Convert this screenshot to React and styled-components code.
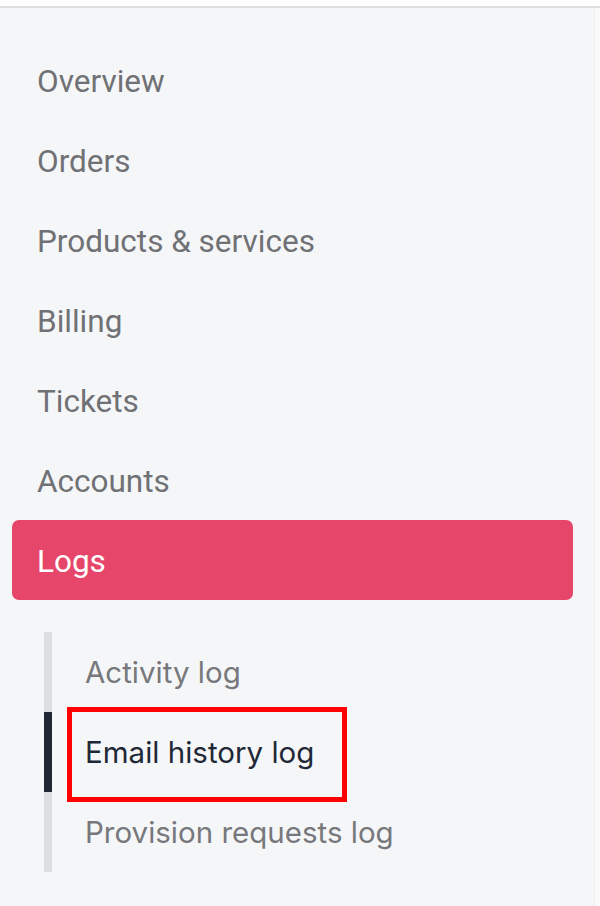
import React from "react";
import styled, { createGlobalStyle } from "styled-components";

const GlobalStyle = createGlobalStyle`
  html, body {
    margin: 0;
    padding: 0;
    background: #ffffff;
  }
`;

const Page = styled.div`
  width: 600px;
  height: 906px;
  display: flex;
  flex-direction: column;
  background: #fafafb;
  overflow: hidden;
`;

const TopStrip = styled.div`
  height: 6px;
  background: #ffffff;
  border-bottom: 2px solid #dedfe2;
  flex-shrink: 0;
`;

const Sidebar = styled.aside`
  flex: 1;
  width: 595px;
  background: #f5f6f8;
  border-right: 1px solid #eceef1;
  padding: 32px 21px 0 12px;
  box-sizing: border-box;
`;

const Nav = styled.nav`
  display: flex;
  flex-direction: column;
`;

const NavItem = styled.a`
  height: 80px;
  box-sizing: border-box;
  display: flex;
  align-items: center;
  padding: 2px 0 0 25px;
  border-radius: 7px;
  font-family: Roboto, "Liberation Sans", sans-serif;
  font-size: 31.5px;
  color: ${(p) => (p.$active ? "#ffffff" : "#707174")};
  background: ${(p) => (p.$active ? "#e6466a" : "transparent")};
  text-decoration: none;
`;

const SubNav = styled.div`
  margin: 32px 0 0 32px;
  display: flex;
  flex-direction: column;
`;

const SubItem = styled.a`
  position: relative;
  height: 80px;
  display: flex;
  align-items: center;
  padding-left: 33px;
  border-left: 8px solid ${(p) => (p.$current ? "#1f2836" : "#dcdde0")};
  font-family: Inter, "Liberation Sans", sans-serif;
  font-size: 29.5px;
  color: ${(p) => (p.$current ? "#1f2836" : "#77787c")};
  text-decoration: none;
`;

// red annotation frame around the current page link
const Highlight = styled.span`
  position: absolute;
  left: 15px;
  top: -5px;
  width: 280px;
  height: 95px;
  border: 5px solid #ff0000;
  box-sizing: border-box;
  pointer-events: none;
`;

const mainItems = ["Overview", "Orders", "Products & services", "Billing", "Tickets", "Accounts"];
const logItems = ["Activity log", "Email history log", "Provision requests log"];

export default function App() {
  return (
    <>
      <GlobalStyle />
      <Page>
        <TopStrip />
        <Sidebar>
          <Nav>
            {mainItems.map((label) => (
              <NavItem key={label}>{label}</NavItem>
            ))}
            <NavItem $active>Logs</NavItem>
          </Nav>
          <SubNav>
            {logItems.map((label) => (
              <SubItem key={label} $current={label === "Email history log"}>
                {label === "Email history log" && <Highlight />}
                {label}
              </SubItem>
            ))}
          </SubNav>
        </Sidebar>
      </Page>
    </>
  );
}
